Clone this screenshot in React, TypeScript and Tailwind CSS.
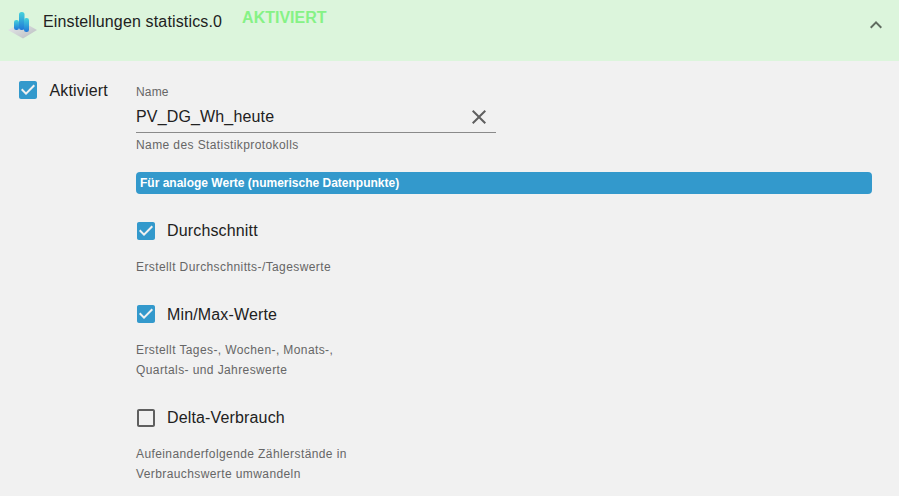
const font = { fontFamily: '"Liberation Sans", Arial, sans-serif' };

function Check({ on }: { on: boolean }) {
  return (
    <svg width="24" height="24" viewBox="0 0 24 24" className="shrink-0">
      {on ? (
        <path
          fill="#3399cc"
          d="M19 3H5c-1.11 0-2 .9-2 2v14c0 1.1.89 2 2 2h14c1.11 0 2-.9 2-2V5c0-1.1-.89-2-2-2zm-9 14l-5-5 1.41-1.41L10 14.17l7.59-7.59L19 8l-9 9z"
        />
      ) : (
        <path
          fill="#5f5f5f"
          d="M19 5v14H5V5h14m0-2H5c-1.1 0-2 .9-2 2v14c0 1.1.9 2 2 2h14c1.1 0 2-.9 2-2V5c0-1.1-.9-2-2-2z"
        />
      )}
    </svg>
  );
}

function Logo() {
  return (
    <svg width="30" height="30" viewBox="0 0 30 30" className="shrink-0">
      <defs>
        <linearGradient id="bar" x1="0" y1="0" x2="0" y2="1">
          <stop offset="0" stopColor="#45d3dc" />
          <stop offset="1" stopColor="#1f78d8" />
        </linearGradient>
        <linearGradient id="plat" x1="0" y1="0" x2="1" y2="1">
          <stop offset="0" stopColor="#eceeef" />
          <stop offset="1" stopColor="#b8bcbf" />
        </linearGradient>
      </defs>
      <path d="M0 21 L15 13 L29 21 L15 29.5 Z" fill="url(#plat)" />
      <rect x="6" y="11" width="5" height="10" rx="2.2" fill="url(#bar)" />
      <rect x="11" y="3" width="5.5" height="18" rx="2.5" fill="url(#bar)" />
      <rect x="16" y="9" width="5" height="14" rx="2.3" fill="url(#bar)" />
    </svg>
  );
}

function Option({
  label,
  on,
  help,
  className,
  labelClass,
}: {
  label: string;
  on: boolean;
  help: string[];
  className?: string;
  labelClass?: string;
}) {
  return (
    <div className={"flex flex-col " + (className ?? "")}>
      <label className="flex items-center h-[24px] gap-[9px] ml-[-2px]">
        <Check on={on} />
        <span className={"text-[16px] tracking-[0.15px] text-[#212121] leading-[24px] " + (labelClass ?? "")}>
          {label}
        </span>
      </label>
      <div className="mt-[14px] text-[12px] leading-[20px] tracking-[0.4px] text-[#666666]">
        {help.map((h) => (
          <div key={h}>{h}</div>
        ))}
      </div>
    </div>
  );
}

export default function App() {
  return (
    <div style={font} className="w-[899px] h-[496px] overflow-hidden bg-[#f1f1f1]">
      <header className="h-[61px] bg-[#dcf5dc] flex items-start pl-[8px] pr-[12px]">
        <div className="mt-[9px]">
          <Logo />
        </div>
        <div className="ml-[5px] mt-[10px] text-[16px] leading-[24px] tracking-[0.15px] text-[#212121]">
          Einstellungen statistics.0
        </div>
        <div className="ml-[20px] mt-[6px] text-[16px] leading-[24px] font-bold text-[#86f286]">AKTIVIERT</div>
        <svg width="24" height="24" viewBox="0 0 24 24" className="ml-auto mt-[13px] mr-[-1px]">
          <path fill="#5f6b5f" d="M12 8l-6 6 1.41 1.41L12 10.83l4.59 4.58L18 14z" />
        </svg>
      </header>

      <main className="flex pl-[16px] pr-[27px] pt-[17px]">
        <label className="flex items-start gap-[9.5px] w-[120px] shrink-0">
          <Check on />
          <span className="text-[16px] tracking-[0.15px] text-[#212121] leading-[24px] pt-[1px]">Aktiviert</span>
        </label>

        <div className="flex-1 flex flex-col">
          <div className="w-[360px]">
            <div className="text-[12px] leading-[14px] tracking-[0.15px] text-[#666666] mt-[7px]">Name</div>
            <div className="flex items-center h-[32px] border-b border-[#8a8a8a] mt-[2px]">
              <span className="text-[16px] tracking-[0.15px] text-[#212121] flex-1">PV_DG_Wh_heute</span>
              <svg width="24" height="24" viewBox="0 0 24 24" className="mr-[5px]">
                <path
                  fill="#5f5f5f"
                  d="M19 6.41L17.59 5 12 10.59 6.41 5 5 6.41 10.59 12 5 17.59 6.41 19 12 13.41 17.59 19 19 17.59 13.41 12z"
                />
              </svg>
            </div>
            <div className="mt-[2px] text-[12px] leading-[20px] tracking-[0.4px] text-[#666666]">
              Name des Statistikprotokolls
            </div>
          </div>

          <div className="mt-[17px] h-[22px] rounded-[4px] bg-[#3399cc] text-white text-[12px] font-bold leading-[22px] pl-[4px]">
            Für analoge Werte (numerische Datenpunkte)
          </div>

          <div className="mt-[25px] flex flex-col gap-[25px]">
            <Option label="Durchschnitt" on help={["Erstellt Durchschnitts-/Tageswerte"]} />
            <Option
              label="Min/Max-Werte"
              labelClass="pt-[1px]"
              on
              help={["Erstellt Tages-, Wochen-, Monats-,", "Quartals- und Jahreswerte"]}
            />
            <Option
              className="mt-[1px]"
              label="Delta-Verbrauch"
              on={false}
              help={["Aufeinanderfolgende Zählerstände in", "Verbrauchswerte umwandeln"]}
            />
          </div>
        </div>
      </main>
    </div>
  );
}
